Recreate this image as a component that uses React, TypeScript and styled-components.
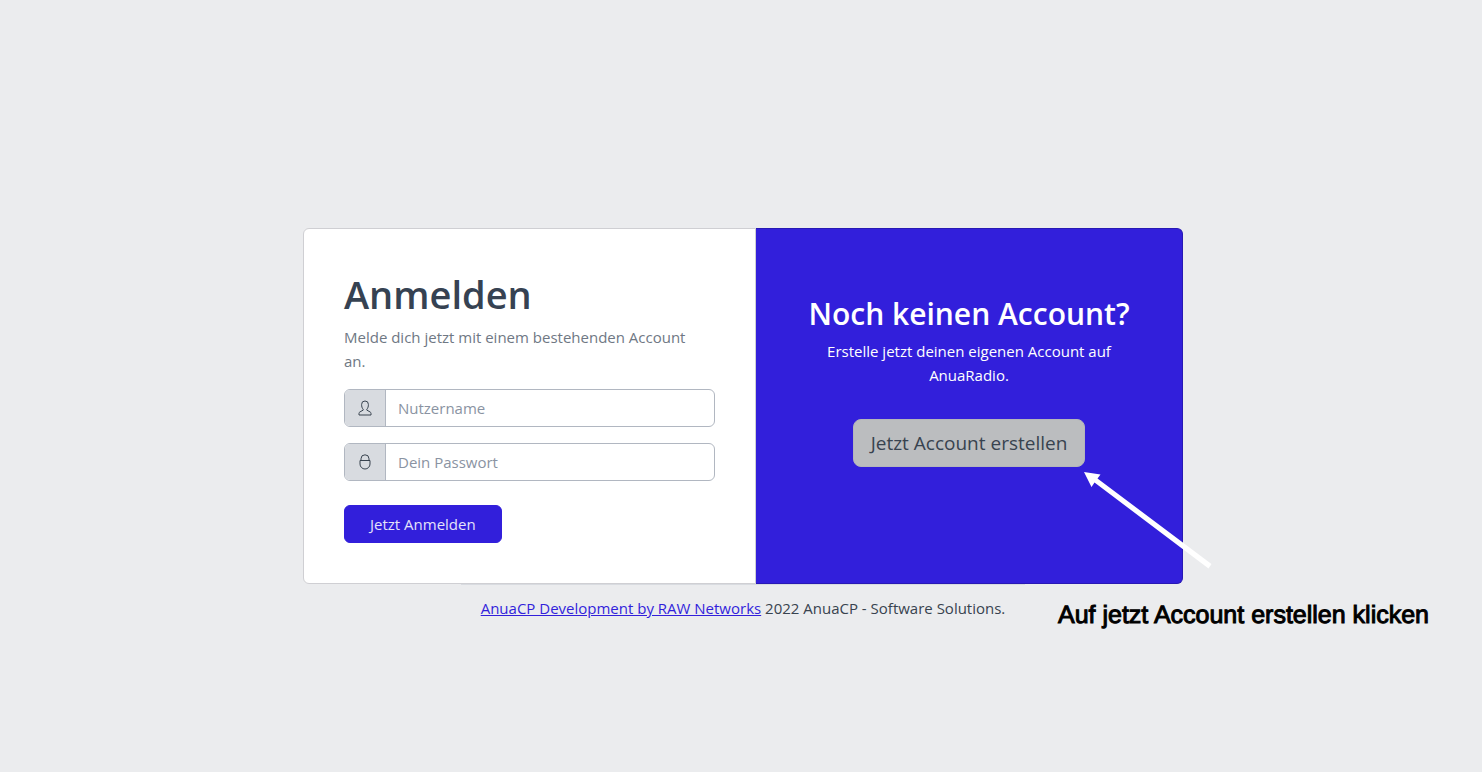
import React from "react";
import styled, { createGlobalStyle } from "styled-components";

const GlobalStyle = createGlobalStyle`
  *, *::before, *::after { box-sizing: border-box; }
  body {
    margin: 0;
    background: #ebecee;
    color: #38434f;
    font-family: "Open Sans", "Noto Sans", sans-serif;
    font-size: 15px;
    line-height: 24px;
  }
`;

const Page = styled.main`
  min-height: 100vh;
  padding: 88px 12px 0 16px;
  display: flex;
  flex-direction: column;
  align-items: center;
  justify-content: center;
  overflow: hidden;
`;

const CardGroup = styled.div`
  position: relative;
  width: 100%;
  max-width: 880px;
  display: grid;
  grid-template-columns: minmax(0, 453fr) minmax(0, 427fr);
`;

const LoginCard = styled.form`
  padding: 40px;
  background: #fff;
  border: 1px solid #cfcfd3;
  border-radius: 6px 0 0 6px;
`;

const SignupCard = styled.section`
  padding: 64px 48px;
  background: #321fdb;
  border: 1px solid #2819b4;
  border-left: 0;
  border-radius: 0 6px 6px 0;
  color: #fff;
  text-align: center;
`;

const Title = styled.h1`
  margin: 0 0 6px;
  font-size: 38px;
  line-height: 50px;
  font-weight: 600;
  color: #364252;
`;

const Subtitle = styled.h2`
  margin: 0 0 4px;
  font-size: 30px;
  line-height: 42px;
  font-weight: 600;
  white-space: nowrap;
`;

const Lead = styled.p`
  margin: 0 0 16px;
  color: #6f7884;
`;

const Pitch = styled.p`
  margin: 0 0 32px;
`;

const InputGroup = styled.div<{ $gap: number }>`
  display: flex;
  height: 38px;
  margin-bottom: ${(p) => p.$gap}px;
  border: 1px solid #b1b7c1;
  border-radius: 6px;
  background: #fff;
  overflow: hidden;
`;

const Addon = styled.label`
  flex: none;
  width: 41px;
  display: flex;
  align-items: center;
  justify-content: center;
  background: #d8dbe0;
  border-right: 1px solid #b1b7c1;
  color: #38434f;
`;

const Field = styled.input`
  flex: 1;
  min-width: 0;
  padding: 0 12px;
  border: 0;
  outline: 0;
  background: transparent;
  color: inherit;
  font: inherit;
  &::placeholder { color: #8a93a2; opacity: 1; }
`;

const Button = styled.button<{ $large?: boolean }>`
  height: ${(p) => (p.$large ? 48 : 38)}px;
  padding: 0 ${(p) => (p.$large ? 17 : 25)}px;
  border: 1px solid ${(p) => (p.$large ? "#b4b6ba" : "#321fdb")};
  border-radius: ${(p) => (p.$large ? 8 : 6)}px;
  background: ${(p) => (p.$large ? "#bbbdbf" : "#321fdb")};
  color: ${(p) => (p.$large ? "#38434f" : "#e4e2fa")};
  font-family: inherit;
  font-size: ${(p) => (p.$large ? 19 : 15)}px;
  white-space: nowrap;
  cursor: pointer;
`;

const Footer = styled.footer`
  height: 47px;
  margin-bottom: 1px;
  padding: 0 20px;
  display: flex;
  align-items: center;
  border-top: 1px solid #d8dbe0;
  white-space: pre;
`;

const FooterLink = styled.a`
  color: #321fdb;
`;

const Arrow = styled.svg`
  position: absolute;
  left: 780px;
  top: 242px;
  pointer-events: none;
`;

const Note = styled.p`
  position: absolute;
  left: 755px;
  top: 372px;
  margin: 0;
  font-family: "Liberation Sans", Arial, sans-serif;
  font-size: 25px;
  line-height: 30px;
  color: #000;
  -webkit-text-stroke: 1px #000;
  text-rendering: geometricPrecision;
  white-space: nowrap;
`;

const UserIcon = () => (
  <svg width="16" height="16" viewBox="0 0 16 16" fill="none" stroke="currentColor" strokeLinejoin="round" aria-hidden="true">
    <path d="M6.2 9.3C5 8 4.6 6.5 4.6 4.4a3.4 3.4 0 0 1 6.8 0c0 2.1-.4 3.6-1.6 4.9v.8l3.4 1.9c.5.3.8.8.8 1.4v1.6H2v-1.6c0-.6.3-1.1.8-1.4l3.4-1.9z" />
  </svg>
);

const LockIcon = () => (
  <svg width="16" height="16" viewBox="0 0 16 16" fill="none" stroke="currentColor" aria-hidden="true">
    <path d="M3 6.5h10v3.500a5 5 0 0 1-10 0zM4 6.500V4.800a4 4 0 0 1 8 0v1.700" />
  </svg>
);

export default function App() {
  return (
    <>
      <GlobalStyle />
      <Page>
        <CardGroup>
          <LoginCard onSubmit={(e) => e.preventDefault()}>
            <Title>Anmelden</Title>
            <Lead>Melde dich jetzt mit einem bestehenden Account<br />an.</Lead>
            <InputGroup $gap={16}>
              <Addon htmlFor="username" aria-label="Nutzername"><UserIcon /></Addon>
              <Field id="username" type="text" placeholder="Nutzername" />
            </InputGroup>
            <InputGroup $gap={24}>
              <Addon htmlFor="password" aria-label="Dein Passwort"><LockIcon /></Addon>
              <Field id="password" type="password" placeholder="Dein Passwort" />
            </InputGroup>
            <Button type="submit">Jetzt Anmelden</Button>
          </LoginCard>
          <SignupCard>
            <Subtitle>Noch keinen Account?</Subtitle>
            <Pitch>Erstelle jetzt deinen eigenen Account auf AnuaRadio.</Pitch>
            <Button type="button" $large>Jetzt Account erstellen</Button>
          </SignupCard>
          <Arrow width="130" height="100" viewBox="0 0 130 100" aria-hidden="true">
            <path d="M1 2L17.500 4.500L14.500 8.500L128.500 94L125.500 98.500L11.500 12.500L8.500 17z" fill="#fff" />
          </Arrow>
          <Note>Auf jetzt Account erstellen klicken</Note>
        </CardGroup>
        <Footer>
          <FooterLink href="#">AnuaCP Development by RAW Networks</FooterLink> 2022 AnuaCP - Software Solutions.
        </Footer>
      </Page>
    </>
  );
}
